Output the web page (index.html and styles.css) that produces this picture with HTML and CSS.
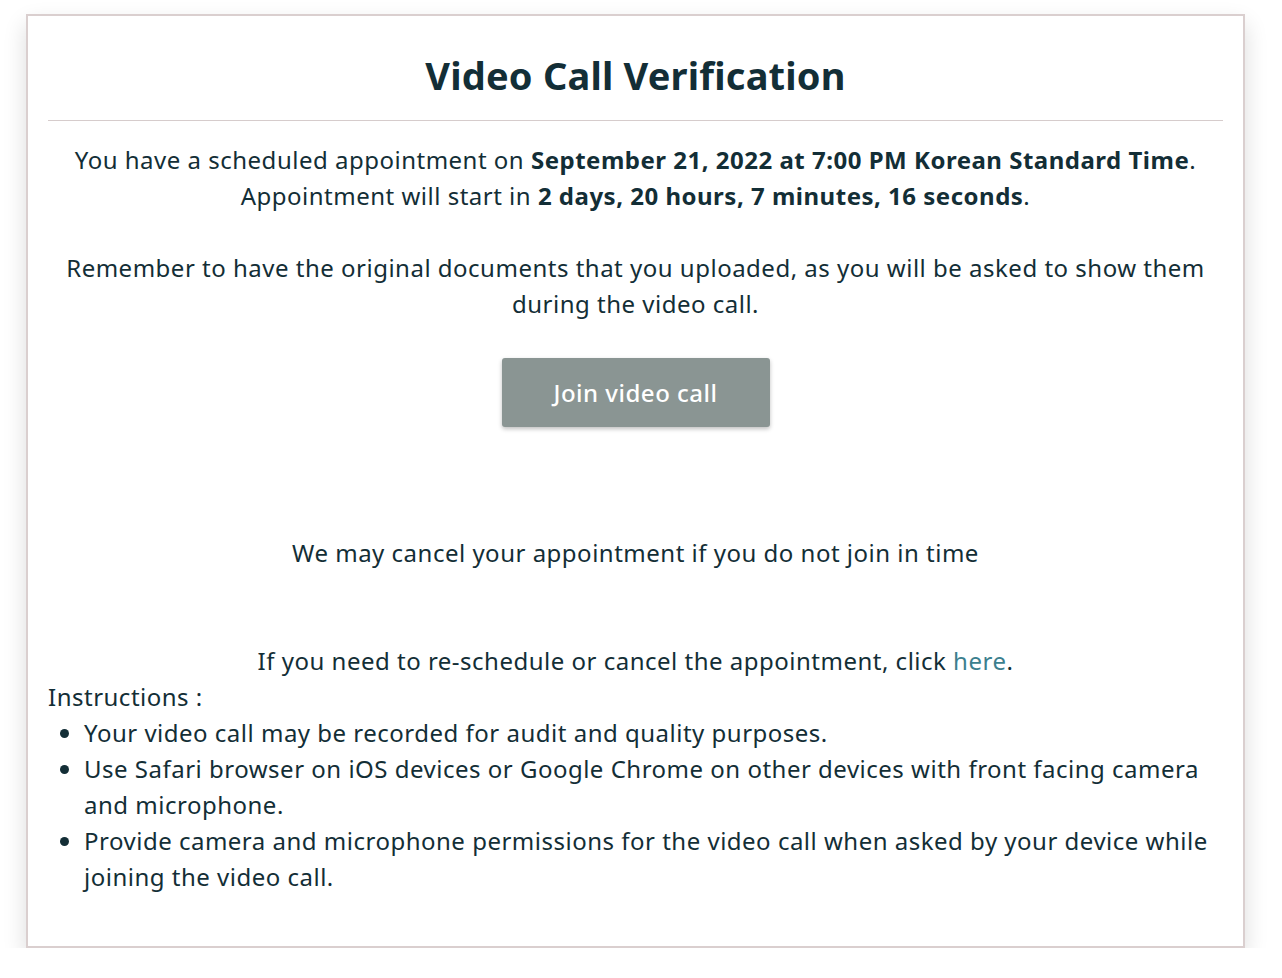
FILE: index.html
```html
<!DOCTYPE html>
<html lang="en">
<head>
    <meta charset="UTF-8">
    <meta name="viewport" content="width=device-width, initial-scale=1.0">
    <title>Video Call Verification</title>
    <link rel="stylesheet" href="styles.css">
</head>
<body>
    <div class="card">
        <h1>Video Call Verification</h1>
        <hr class="divider">
        <div class="details">
            You have a scheduled appointment on <b>September 21, 2022 at 7:00 PM Korean Standard Time</b>.<br>
            Appointment will start in <b>2 days, 20 hours, 7 minutes, 16 seconds</b>.<br>
            <br>
            Remember to have the original documents that you uploaded, as you will be asked to show them during the video call.
        </div>
        <div class="actions">
            <button class="join-btn" type="button">Join video call</button>
        </div>
        <p class="notice">We may cancel your appointment if you do not join in time</p>
        <p class="reschedule">If you need to re-schedule or cancel the appointment, click <a href="#">here</a>.</p>
        <div class="instructions">
            <div>Instructions :</div>
            <ul>
                <li>Your video call may be recorded for audit and quality purposes.</li>
                <li>Use Safari browser on iOS devices or Google Chrome on other devices with front facing camera and microphone.</li>
                <li>Provide camera and microphone permissions for the video call when asked by your device while joining the video call.</li>
            </ul>
        </div>
    </div>
</body>
</html>
```

FILE: styles.css
```css
body {
    font-family: "Noto Sans", Arial, sans-serif;
    font-size: 24px;
    line-height: 36px;
    letter-spacing: 0.5px;
    color: #132e36;
    background: #fff;
    margin: 0;
}
.card {
    width: 1175px;
    margin: 14px 0 0 26px;
    padding: 0 20px 51px 20px;
    border: 2px solid #dacfcf;
    box-shadow: 0 10px 22px rgba(0, 0, 0, 0.14);
    background: #fff;
}
h1 {
    font-size: 38px;
    line-height: 44px;
    letter-spacing: 0.2px;
    font-weight: bold;
    text-align: center;
    margin: 0;
    padding: 37px 0 23px;
}
.divider {
    border: none;
    border-top: 1px solid #d6cccc;
    margin: 0 0 21px;
}
.details {
    text-align: center;
}
.actions {
    display: flex;
    justify-content: center;
    margin-top: 36px;
}
.join-btn {
    width: 268px;
    height: 69px;
    border: none;
    border-radius: 3px;
    background: #8a9593;
    color: #fff;
    font-family: inherit;
    font-size: 24px;
    font-weight: 500;
    letter-spacing: 0.5px;
    box-shadow: 0 2px 4px rgba(0, 0, 0, 0.25);
}
.notice {
    text-align: center;
    margin: 108px 0 0;
}
.reschedule {
    text-align: center;
    margin: 72px 0 0;
}
.reschedule a {
    color: #3c7f8e;
    text-decoration: none;
}
.instructions ul {
    margin: 0;
    padding-left: 36px;
}
```
